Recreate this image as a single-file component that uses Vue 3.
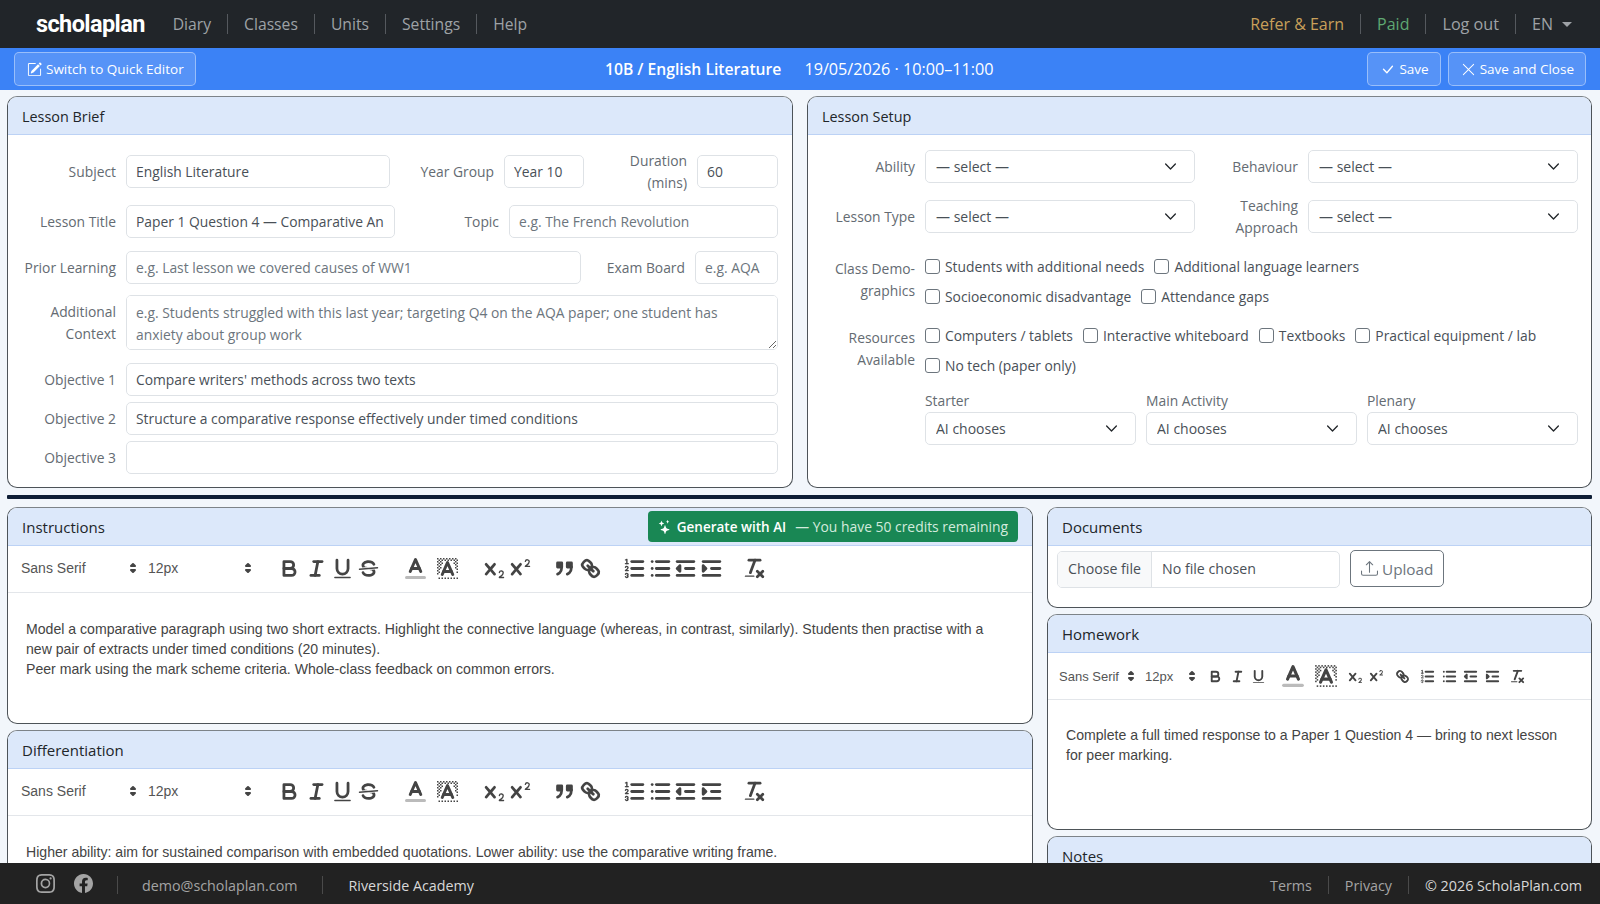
<template>
  <div class="page">
    <nav class="topnav">
      <span class="brand">scholaplan</span>
      <template v-for="(l, i) in navLeft" :key="l">
        <span v-if="i" class="sep"></span>
        <a class="nav-link">{{ l }}</a>
      </template>
      <span class="spacer"></span>
      <a class="nav-link refer">Refer &amp; Earn</a>
      <span class="sep"></span>
      <a class="nav-link paid">Paid</a>
      <span class="sep"></span>
      <a class="nav-link logout">Log out</a>
      <span class="sep"></span>
      <a class="nav-link lang">EN<i class="caret"></i></a>
    </nav>

    <header class="actionbar">
      <button class="bar-btn">
        <svg viewBox="0 0 16 16" width="15" height="15" fill="currentColor"><path d="M15.502 1.94a.5.5 0 0 1 0 .706L14.459 3.69l-2-2L13.502.646a.5.5 0 0 1 .707 0l1.293 1.293zm-1.75 2.456-2-2L4.939 9.21a.5.5 0 0 0-.121.196l-.805 2.414a.25.25 0 0 0 .316.316l2.414-.805a.5.5 0 0 0 .196-.12l6.813-6.814z"/><path d="M1 13.5A1.5 1.5 0 0 0 2.5 15h11a1.5 1.5 0 0 0 1.5-1.5v-6a.5.5 0 0 0-1 0v6a.5.5 0 0 1-.5.5h-11a.5.5 0 0 1-.5-.5v-11a.5.5 0 0 1 .5-.5H9a.5.5 0 0 0 0-1H2.5A1.5 1.5 0 0 0 1 2.5z"/></svg>
        Switch to Quick Editor
      </button>
      <div class="bar-title"><b>10B / English Literature</b><span>19/05/2026 · 10:00–11:00</span></div>
      <div class="bar-right">
        <button class="bar-btn">
          <svg viewBox="0 0 16 16" width="15" height="15" fill="currentColor"><path d="M12.736 3.97a.733.733 0 0 1 1.047 0c.286.289.29.756.01 1.05L7.88 12.01a.733.733 0 0 1-1.065.02L3.217 8.384a.757.757 0 0 1 0-1.06.733.733 0 0 1 1.047 0l3.052 3.093 5.4-6.425z"/></svg>
          Save
        </button>
        <button class="bar-btn">
          <svg viewBox="0 0 16 16" width="15" height="15" fill="currentColor"><path d="M2.146 2.854a.5.5 0 1 1 .708-.708L8 7.293l5.146-5.147a.5.5 0 0 1 .708.708L8.707 8l5.147 5.146a.5.5 0 0 1-.708.708L8 8.707l-5.146 5.147a.5.5 0 0 1-.708-.708L7.293 8z"/></svg>
          Save and Close
        </button>
      </div>
    </header>

    <main class="content">
      <div class="top-row">
        <section class="card">
          <div class="card-head">Lesson Brief</div>
          <div class="card-body brief">
            <div class="row r1">
              <label>Subject</label><input value="English Literature" />
              <label>Year Group</label><input value="Year 10" />
              <label>Duration (mins)</label><input value="60" />
            </div>
            <div class="row r2">
              <label>Lesson Title</label><input value="Paper 1 Question 4 — Comparative Analysis" />
              <label>Topic</label><input placeholder="e.g. The French Revolution" />
            </div>
            <div class="row r3">
              <label>Prior Learning</label><input placeholder="e.g. Last lesson we covered causes of WW1" />
              <label>Exam Board</label><input placeholder="e.g. AQA" />
            </div>
            <div class="row r4">
              <label>Additional Context</label>
              <textarea placeholder="e.g. Students struggled with this last year; targeting Q4 on the AQA paper; one student has anxiety about group work"></textarea>
            </div>
            <div class="row r5"><label>Objective 1</label><input value="Compare writers' methods across two texts" /></div>
            <div class="row r5"><label>Objective 2</label><input value="Structure a comparative response effectively under timed conditions" /></div>
            <div class="row r5"><label>Objective 3</label><input /></div>
          </div>
        </section>

        <section class="card">
          <div class="card-head">Lesson Setup</div>
          <div class="card-body setup">
            <div class="row s1">
              <label>Ability</label><select><option>— select —</option></select>
              <label>Behaviour</label><select><option>— select —</option></select>
            </div>
            <div class="row s1 s2">
              <label>Lesson Type</label><select><option>— select —</option></select>
              <label>Teaching Approach</label><select><option>— select —</option></select>
            </div>
            <div v-for="g in checkGroups" :key="g.label" class="row s3">
              <label>{{ g.label }}</label>
              <div>
                <div v-for="(line, i) in g.lines" :key="i" class="check-line">
                  <label v-for="c in line" :key="c" class="check"><input type="checkbox" />{{ c }}</label>
                </div>
              </div>
            </div>
            <div class="phases">
              <div v-for="p in phases" :key="p" class="phase">
                <label>{{ p }}</label>
                <select><option>AI chooses</option></select>
              </div>
            </div>
          </div>
        </section>
      </div>

      <div class="divider"></div>

      <div class="bottom-row">
        <div class="col">
          <section class="card">
            <div class="card-head gen-head">
              Instructions
              <button class="gen-btn">
                <svg viewBox="0 0 16 16" width="14" height="14" fill="currentColor"><path d="M7.657 6.247c.11-.33.576-.33.686 0l.645 1.937a2.89 2.89 0 0 0 1.829 1.828l1.936.645c.33.11.33.576 0 .686l-1.937.645a2.89 2.89 0 0 0-1.828 1.829l-.645 1.936a.361.361 0 0 1-.686 0l-.645-1.937a2.89 2.89 0 0 0-1.828-1.828l-1.937-.645a.361.361 0 0 1 0-.686l1.937-.645a2.89 2.89 0 0 0 1.828-1.828zM3.794 1.148a.217.217 0 0 1 .412 0l.387 1.162c.173.518.579.924 1.097 1.097l1.162.387a.217.217 0 0 1 0 .412l-1.162.387A1.73 1.73 0 0 0 4.593 5.69l-.387 1.162a.217.217 0 0 1-.412 0L3.407 5.69A1.73 1.73 0 0 0 2.31 4.593l-1.162-.387a.217.217 0 0 1 0-.412l1.162-.387A1.73 1.73 0 0 0 3.407 2.31zM10.863.099a.145.145 0 0 1 .274 0l.258.774c.115.346.386.617.732.732l.774.258a.145.145 0 0 1 0 .274l-.774.258a1.16 1.16 0 0 0-.732.732l-.258.774a.145.145 0 0 1-.274 0l-.258-.774a1.16 1.16 0 0 0-.732-.732L9.1 2.137a.145.145 0 0 1 0-.274l.774-.258c.346-.115.617-.386.732-.732z"/></svg>
                <b>Generate with AI</b><span>— You have 50 credits remaining</span>
              </button>
            </div>
            <div class="toolbar wide">
              <div class="picker font-p">Sans Serif<svg viewBox="0 0 18 18" v-html="icons.arrows"></svg></div>
              <div class="picker size-p">12px<svg viewBox="0 0 18 18" v-html="icons.arrows"></svg></div>
              <div v-for="(g, i) in wideGroups" :key="i" class="tool-group">
                <span v-for="n in g" :key="n" class="tool" :class="n"><svg viewBox="0 0 18 18" v-html="icons[n]"></svg></span>
              </div>
            </div>
            <div class="editor ed-inst">
              Model a comparative paragraph using two short extracts. Highlight the connective language (whereas, in contrast, similarly). Students then practise with a new pair of extracts under timed conditions (20 minutes).<br />
              Peer mark using the mark scheme criteria. Whole-class feedback on common errors.
            </div>
          </section>

          <section class="card">
            <div class="card-head">Differentiation</div>
            <div class="toolbar wide">
              <div class="picker font-p">Sans Serif<svg viewBox="0 0 18 18" v-html="icons.arrows"></svg></div>
              <div class="picker size-p">12px<svg viewBox="0 0 18 18" v-html="icons.arrows"></svg></div>
              <div v-for="(g, i) in wideGroups" :key="i" class="tool-group">
                <span v-for="n in g" :key="n" class="tool" :class="n"><svg viewBox="0 0 18 18" v-html="icons[n]"></svg></span>
              </div>
            </div>
            <div class="editor ed-inst">
              Higher ability: aim for sustained comparison with embedded quotations. Lower ability: use the comparative writing frame.
            </div>
          </section>
        </div>

        <div class="col">
          <section class="card">
            <div class="card-head">Documents</div>
            <div class="docs">
              <div class="file"><span class="file-btn">Choose file</span><span class="file-name">No file chosen</span></div>
              <button class="upload">
                <svg viewBox="0 0 16 16" width="17" height="17" fill="currentColor"><path d="M.5 9.9a.5.5 0 0 1 .5.5v2.5a1 1 0 0 0 1 1h12a1 1 0 0 0 1-1v-2.5a.5.5 0 0 1 1 0v2.5a2 2 0 0 1-2 2H2a2 2 0 0 1-2-2v-2.5a.5.5 0 0 1 .5-.5"/><path d="M7.646 1.146a.5.5 0 0 1 .708 0l3 3a.5.5 0 0 1-.708.708L8.5 2.707V11.5a.5.5 0 0 1-1 0V2.707L5.354 4.854a.5.5 0 1 1-.708-.708z"/></svg>
                Upload
              </button>
            </div>
          </section>

          <section class="card">
            <div class="card-head">Homework</div>
            <div class="toolbar compact">
              <div class="picker font-p">Sans Serif<svg viewBox="0 0 18 18" v-html="icons.arrows"></svg></div>
              <div class="picker size-p">12px<svg viewBox="0 0 18 18" v-html="icons.arrows"></svg></div>
              <div v-for="(g, i) in compactGroups" :key="i" class="tool-group">
                <span v-for="n in g" :key="n" class="tool" :class="n"><svg viewBox="0 0 18 18" v-html="icons[n]"></svg></span>
              </div>
            </div>
            <div class="editor ed-home">
              Complete a full timed response to a Paper 1 Question 4 — bring to next lesson for peer marking.
            </div>
          </section>

          <section class="card">
            <div class="card-head">Notes</div>
          </section>
        </div>
      </div>
    </main>

    <footer class="foot">
      <svg viewBox="0 0 16 16" width="19" height="19" fill="currentColor"><path d="M8 0C5.829 0 5.556.01 4.703.048 3.85.088 3.269.222 2.76.42a3.9 3.9 0 0 0-1.417.923A3.9 3.9 0 0 0 .42 2.76C.222 3.268.087 3.85.048 4.7.01 5.555 0 5.827 0 8.001c0 2.172.01 2.444.048 3.297.04.852.174 1.433.372 1.942.205.526.478.972.923 1.417.444.445.89.719 1.416.923.51.198 1.09.333 1.942.372C5.555 15.99 5.827 16 8 16s2.444-.01 3.298-.048c.851-.04 1.434-.174 1.943-.372a3.9 3.9 0 0 0 1.416-.923c.445-.445.718-.891.923-1.417.197-.509.332-1.09.372-1.942C15.99 10.445 16 10.173 16 8s-.01-2.445-.048-3.299c-.04-.851-.175-1.433-.372-1.941a3.9 3.9 0 0 0-.923-1.417A3.9 3.9 0 0 0 13.24.42c-.51-.198-1.092-.333-1.943-.372C10.443.01 10.172 0 7.998 0zm-.717 1.442h.718c2.136 0 2.389.007 3.232.046.78.035 1.204.166 1.486.275.373.145.64.319.92.599s.453.546.598.92c.11.281.24.705.275 1.485.039.843.047 1.096.047 3.231s-.008 2.389-.047 3.232c-.035.78-.166 1.203-.275 1.485a2.5 2.5 0 0 1-.599.919c-.28.28-.546.453-.92.598-.28.11-.704.24-1.485.276-.843.038-1.096.047-3.232.047s-2.39-.009-3.233-.047c-.78-.036-1.203-.166-1.485-.276a2.5 2.5 0 0 1-.92-.598 2.5 2.5 0 0 1-.6-.92c-.109-.281-.24-.705-.275-1.485-.038-.843-.046-1.096-.046-3.233s.008-2.388.046-3.231c.036-.78.166-1.204.276-1.486.145-.373.319-.64.599-.92s.546-.453.92-.598c.282-.11.705-.24 1.485-.276.738-.034 1.024-.044 2.515-.045zm4.988 1.328a.96.96 0 1 0 0 1.92.96.96 0 0 0 0-1.92m-4.27 1.122a4.109 4.109 0 1 0 0 8.217 4.109 4.109 0 0 0 0-8.217m0 1.441a2.667 2.667 0 1 1 0 5.334 2.667 2.667 0 0 1 0-5.334"/></svg>
      <svg class="fb" viewBox="0 0 16 16" width="19" height="19" fill="currentColor"><path d="M16 8.049c0-4.446-3.582-8.05-8-8.05C3.58 0-.002 3.603-.002 8.05c0 4.017 2.926 7.347 6.75 7.951v-5.625h-2.03V8.05H6.75V6.275c0-2.017 1.195-3.131 3.022-3.131.876 0 1.791.157 1.791.157v1.98h-1.009c-.993 0-1.303.621-1.303 1.258v1.51h2.218l-.354 2.326H9.25V16c3.824-.604 6.75-3.934 6.75-7.951"/></svg>
      <span class="sep"></span>
      <span>demo@scholaplan.com</span>
      <span class="sep"></span>
      <span class="school">Riverside Academy</span>
      <span class="spacer"></span>
      <span>Terms</span>
      <span class="sep tight"></span>
      <span>Privacy</span>
      <span class="sep tight"></span>
      <span class="copy">© 2026 ScholaPlan.com</span>
    </footer>
  </div>
</template>

<script setup>
const navLeft = ["Diary", "Classes", "Units", "Settings", "Help"];

const checkGroups = [
  {
    label: "Class Demo-graphics",
    lines: [
      ["Students with additional needs", "Additional language learners"],
      ["Socioeconomic disadvantage", "Attendance gaps"],
    ],
  },
  {
    label: "Resources Available",
    lines: [
      ["Computers / tablets", "Interactive whiteboard", "Textbooks", "Practical equipment / lab"],
      ["No tech (paper only)"],
    ],
  },
];

const phases = ["Starter", "Main Activity", "Plenary"];

const wideGroups = [
  ["bold", "italic", "underline", "strike"],
  ["color", "background"],
  ["sub", "sup"],
  ["blockquote", "link"],
  ["ol", "ul", "outdent", "indent"],
  ["clean"],
];

const compactGroups = [
  ["bold", "italic", "underline"],
  ["color", "background"],
  ["sub", "sup"],
  ["link"],
  ["ol", "ul", "outdent", "indent"],
  ["clean"],
];

// hatch behind the background-colour icon
let hatch = "";
for (let y = 2; y < 16; y++) {
  for (let x = 2; x < 16; x++) {
    let insideA = y >= 4 && y <= 14 && x >= 6 - (y - 4) * 0.4 && x <= 12 + (y - 4) * 0.4;
    if ((x + y) % 2 == 0 && !insideA) {
      hatch += `<rect x="${x}" y="${y}" width="1" height="1"/>`;
    }
  }
}

const icons = {
  arrows: '<polygon class="q-s q-f" points="7 11 9 13 11 11 7 11"/><polygon class="q-s q-f" points="7 7 9 5 11 7 7 7"/>',
  bold: '<path class="q-s" d="M5,4H9.5A2.5,2.5,0,0,1,12,6.5v0A2.5,2.5,0,0,1,9.5,9H5A0,0,0,0,1,5,9V4A0,0,0,0,1,5,4Z"/><path class="q-s" d="M5,9h5.5A2.5,2.5,0,0,1,13,11.5v0A2.5,2.5,0,0,1,10.5,14H5a0,0,0,0,1,0,0V9A0,0,0,0,1,5,9Z"/>',
  italic: '<line class="q-s" x1="7" x2="13" y1="4" y2="4"/><line class="q-s" x1="5" x2="11" y1="14" y2="14"/><line class="q-s" x1="8" x2="10" y1="14" y2="4"/>',
  underline: '<path class="q-s" d="M5,3V9a4.012,4.012,0,0,0,4,4H9a4.012,4.012,0,0,0,4-4V3"/><rect class="q-f" height="1" rx=".5" ry=".5" width="12" x="3" y="15"/>',
  strike: '<line class="q-s q-t" x1="15.5" x2="2.5" y1="8.5" y2="9.5"/><path class="q-f" d="M9.007,8C6.542,7.791,6,7.519,6,6.5,6,5.792,7.283,5,9,5c1.571,0,2.765.679,2.969,1.309a1,1,0,0,0,1.9-.617C13.356,4.106,11.354,3,9,3,6.2,3,4,4.538,4,6.5a3.2,3.2,0,0,0,.5,1.843Z"/><path class="q-f" d="M8.984,10C11.457,10.208,12,10.479,12,11.5c0,.708-1.283,1.5-3,1.5-1.571,0-2.765-.679-2.969-1.309a1,1,0,1,0-1.9.617C4.644,13.894,6.646,15,9,15c2.8,0,5-1.538,5-3.5a3.2,3.2,0,0,0-.5-1.843Z"/>',
  color: '<line class="q-s q-l" x1="3" x2="15" y1="15" y2="15"/><polyline class="q-s" points="5.5 11 9 3 12.5 11"/><line class="q-s" x1="11.63" x2="6.38" y1="9" y2="9"/>',
  background: '<g class="q-f">' + hatch + '</g><polyline class="q-s" points="5.5 13 9 5 12.5 13"/><line class="q-s" x1="11.63" x2="6.38" y1="11" y2="11"/>',
  sub: '<path class="q-f" d="M15.5,15H13.861a3.858,3.858,0,0,0,1.914-2.975,1.8,1.8,0,0,0-1.6-1.751A1.921,1.921,0,0,0,12.021,11.7a0.50013,0.50013,0,1,0,.957.291h0a0.914,0.914,0,0,1,1.053-.725,0.81,0.81,0,0,1,.744.762c0,1.076-1.16971,1.86982-1.93971,2.43082A1.45639,1.45639,0,0,0,12,15.5a0.5,0.5,0,0,0,.5.5h3A0.5,0.5,0,0,0,15.5,15Z"/><path class="q-f" d="M9.65,5.241a1,1,0,0,0-1.409.108L6,7.964,3.759,5.349A1,1,0,0,0,2.192,6.59178Q2.21541,6.6213,2.241,6.649L4.684,9.5,2.241,12.35A1,1,0,0,0,3.71,13.70722q0.02557-.02768.049-0.05722L6,11.036,8.241,13.65a1,1,0,1,0,1.567-1.24277Q9.78459,12.3777,9.759,12.35L7.316,9.5,9.759,6.651A1,1,0,0,0,9.65,5.241Z"/>',
  sup: '<path class="q-f" d="M15.5,7H13.861a4.015,4.015,0,0,0,1.914-2.975,1.8,1.8,0,0,0-1.6-1.751A1.922,1.922,0,0,0,12.021,3.7a0.5,0.5,0,1,0,.957.291,0.917,0.917,0,0,1,1.053-.725,0.81,0.81,0,0,1,.744.762c0,1.077-1.164,1.925-1.934,2.486A1.423,1.423,0,0,0,12,7.5a0.5,0.5,0,0,0,.5.5h3A0.5,0.5,0,0,0,15.5,7Z"/><path class="q-f" d="M9.651,5.241a1,1,0,0,0-1.41.108L6,7.964,3.759,5.349a1,1,0,1,0-1.519,1.3L4.683,9.5,2.241,12.35a1,1,0,1,0,1.519,1.3L6,11.036,8.241,13.65a1,1,0,0,0,1.519-1.3L7.317,9.5,9.759,6.651A1,1,0,0,0,9.651,5.241Z"/>',
  blockquote: '<rect class="q-f q-s" height="3" width="3" x="4" y="5"/><rect class="q-f q-s" height="3" width="3" x="11" y="5"/><path class="q-s" d="M7,8c0,4.031-3,5-3,5"/><path class="q-s" d="M14,8c0,4.031-3,5-3,5"/>',
  link: '<line class="q-s" x1="7" x2="11" y1="7" y2="11"/><path class="q-s" d="M8.9,4.577a3.476,3.476,0,0,1,.36,4.679A3.476,3.476,0,0,1,4.577,8.9C3.185,7.5,2.035,6.4,4.217,4.217S7.5,3.185,8.9,4.577Z"/><path class="q-s" d="M13.423,9.1a3.476,3.476,0,0,0-4.679-.36,3.476,3.476,0,0,0,.36,4.679c1.392,1.392,2.5,2.542,4.679.36S14.815,10.5,13.423,9.1Z"/>',
  ol: '<line class="q-s" x1="7" x2="15" y1="4" y2="4"/><line class="q-s" x1="7" x2="15" y1="9" y2="9"/><line class="q-s" x1="7" x2="15" y1="14" y2="14"/><line class="q-s q-t" x1="2.5" x2="4.5" y1="5.5" y2="5.5"/><path class="q-f" d="M3.5,6A0.5,0.5,0,0,1,3,5.5V3.085l-0.276.138A0.5,0.5,0,0,1,2.053,3c-0.124-.247-0.023-0.324.224-0.447l1-.5A0.5,0.5,0,0,1,4,2.5v3A0.5,0.5,0,0,1,3.5,6Z"/><path class="q-s q-t" d="M4.5,10.5h-2c0-.234,1.85-1.076,1.85-2.234A0.959,0.959,0,0,0,2.5,8.156"/><path class="q-s q-t" d="M2.5,14.846a0.959,0.959,0,0,0,1.85-.109A0.7,0.7,0,0,0,3.75,14a0.688,0.688,0,0,0,.6-0.736,0.959,0.959,0,0,0-1.85-.109"/>',
  ul: '<line class="q-s" x1="6" x2="15" y1="4" y2="4"/><line class="q-s" x1="6" x2="15" y1="9" y2="9"/><line class="q-s" x1="6" x2="15" y1="14" y2="14"/><line class="q-s" x1="3" x2="3" y1="4" y2="4"/><line class="q-s" x1="3" x2="3" y1="9" y2="9"/><line class="q-s" x1="3" x2="3" y1="14" y2="14"/>',
  outdent: '<line class="q-s" x1="3" x2="15" y1="14" y2="14"/><line class="q-s" x1="3" x2="15" y1="4" y2="4"/><line class="q-s" x1="9" x2="15" y1="9" y2="9"/><polyline class="q-f q-s" points="5 7 5 11 3 9 5 7"/>',
  indent: '<line class="q-s" x1="3" x2="15" y1="14" y2="14"/><line class="q-s" x1="3" x2="15" y1="4" y2="4"/><line class="q-s" x1="9" x2="15" y1="9" y2="9"/><polyline class="q-f q-s" points="3 7 3 11 5 9 3 7"/>',
  clean: '<line class="q-s" x1="5" x2="13" y1="3" y2="3"/><line class="q-s" x1="6" x2="9.35" y1="12" y2="3"/><line class="q-s" x1="11" x2="15" y1="11" y2="15"/><line class="q-s" x1="15" x2="11" y1="11" y2="15"/><rect class="q-f" height="1" rx=".5" ry=".5" width="7" x="2" y="14"/>',
};
</script>

<style scoped>
.page {
  display: flex;
  flex-direction: column;
  height: 904px;
  overflow: hidden;
  background: #f2f6fb;
  color: #212529;
  font-family: "Open Sans", "Noto Sans", sans-serif;
  font-size: 13.85px;
}

.topnav {
  display: flex;
  align-items: center;
  flex: 0 0 48px;
  padding: 0 28px 0 36px;
  background: #212529;
  color: #9ea2a6;
}
.brand {
  margin-right: 28px;
  color: #fff;
  font-family: Roboto, sans-serif;
  font-size: 23.5px;
  font-weight: 700;
  letter-spacing: -0.6px;
}
.nav-link { font-size: 15.7px; }
.sep {
  width: 1px;
  height: 20px;
  margin: 0 16px;
  background: #55595e;
}
.spacer { flex: 1; }
.refer { color: #c9a05a; font-size: 16px; }
.paid { color: #5fa872; font-size: 16px; }
.logout { font-size: 16.2px; }
.lang { display: flex; align-items: center; font-weight: 500; font-size: 16px; }
.caret {
  margin-left: 9px;
  border-top: 5px solid #9ea2a6;
  border-left: 5px solid transparent;
  border-right: 5px solid transparent;
}

.actionbar {
  position: relative;
  display: flex;
  align-items: center;
  justify-content: space-between;
  flex: 0 0 42px;
  padding: 0 14px;
  background: #3b82f6;
  color: #fff;
}
.bar-btn {
  display: inline-flex;
  align-items: center;
  gap: 4px;
  height: 34px;
  padding: 0 11px 0 12px;
  border: 1px solid rgba(255, 255, 255, 0.4);
  border-radius: 5px;
  background: rgba(255, 255, 255, 0.14);
  color: #fff;
  font: inherit;
  font-size: 13.5px;
}
.bar-title {
  position: absolute;
  left: 605px;
  display: flex;
  gap: 23px;
  font-size: 15.7px;
}
.bar-title b { font-weight: 600; }
.bar-title span { font-size: 16.2px; }
.bar-right { display: flex; gap: 7px; }

.content {
  flex: 1;
  min-height: 0;
  overflow: hidden;
  padding: 6px 8px 0 7px;
}
.top-row {
  display: grid;
  grid-template-columns: 786px 785px;
  gap: 14px;
}
.card {
  border: 1px solid #4d5358;
  border-top-color: #7d8388;
  border-radius: 10px;
  background: #fff;
  overflow: hidden;
}
.card-head {
  display: flex;
  align-items: center;
  box-sizing: border-box;
  height: 38px;
  padding: 0 14px;
  border-bottom: 1px solid #bcd2f5;
  background: #dce8fa;
  font-size: 15px;
}
.top-row .card-head { font-size: 14.4px; padding-top: 1px; }

.row { display: grid; column-gap: 10px; align-items: center; }
.row > label {
  color: #646b72;
  text-align: right;
  line-height: 21.6px;
}
input:not([type="checkbox"]), textarea, select {
  box-sizing: border-box;
  width: 100%;
  height: 33px;
  min-width: 0;
  padding: 0 10.5px 0 9px;
  border: 1px solid #dee2e6;
  border-radius: 5px;
  background-color: #fff;
  color: #495057;
  font: inherit;
  outline: none;
}
input::placeholder, textarea::placeholder { color: #6c757d; opacity: 1; }

.brief { height: 352px; padding: 15px 14px 0 14px; box-sizing: border-box; }
.r1 { grid-template-columns: 94px 264px 94px 80px 93px 81px; margin-bottom: 12px; }
.r2 { grid-template-columns: 94px 269px 94px 269px; margin-bottom: 13px; }
.r3 { grid-template-columns: 94px 455px 94px 83px; margin-bottom: 11px; }
.r4 { grid-template-columns: 94px 1fr; margin-bottom: 13px; }
.r5 { grid-template-columns: 94px 1fr; margin-bottom: 6px; }
textarea { height: 55px; padding: 6px 40px 6px 9px; line-height: 22px; resize: vertical; }

select {
  appearance: none;
  padding-left: 10px;
  font-size: 14px;
  background-image: url("data:image/svg+xml,%3csvg xmlns='http://www.w3.org/2000/svg' viewBox='0 0 16 16'%3e%3cpath fill='none' stroke='%23212529' stroke-linecap='round' stroke-linejoin='round' stroke-width='1.6' d='M2 5l6 6 6-6'/%3e%3c/svg%3e");
  background-repeat: no-repeat;
  background-position: right 16px center;
  background-size: 15px 13px;
}

.setup { height: 352px; padding: 15px 13px 0; box-sizing: border-box; }
.s1 { grid-template-columns: 94px 270px 93px 270px; margin-bottom: 12px; }
.s2 { margin-bottom: 18px; }
.s3 { grid-template-columns: 94px 1fr; align-items: start; margin-bottom: 9px; }
.s3 > label { padding-top: 2px; }
.check-line { display: flex; gap: 10px; height: 21px; margin-bottom: 9px; align-items: center; }
.check { display: inline-flex; align-items: center; gap: 5px; color: #495057; }
.check input {
  appearance: none;
  width: 15px;
  height: 15px;
  margin: 0;
  border: 1px solid #6c757d;
  border-radius: 3px;
  background: #fff;
}
.phases {
  display: grid;
  grid-template-columns: repeat(3, 1fr);
  gap: 10px;
  margin: -4px 0 0 104px;
}
.phase label { display: block; margin-bottom: 1px; color: #646b72; line-height: 21px; }

.divider {
  height: 4px;
  margin: 7px 0 8px;
  background: #0f1e36;
  border-radius: 1px;
}

.bottom-row {
  display: grid;
  grid-template-columns: 1026px 545px;
  gap: 14px;
}
.col { display: flex; flex-direction: column; gap: 6px; }

.gen-head { justify-content: space-between; padding-right: 14px; }
.gen-btn {
  display: inline-flex;
  align-items: center;
  gap: 5px;
  height: 31px;
  padding: 0 10px;
  border: 0;
  border-radius: 4px;
  background: #198754;
  color: #fff;
  font: inherit;
  font-size: 13.5px;
}
.gen-btn b { font-weight: 600; }
.gen-btn span { margin-left: 4px; color: #d3ebdd; font-size: 13.9px; }

.toolbar {
  display: flex;
  align-items: center;
  box-sizing: border-box;
  height: 47px;
  padding-left: 8px;
  padding-bottom: 2px;
  border-bottom: 1px solid #e3e6ea;
  color: #444;
  font-family: "Liberation Sans", sans-serif;
  font-size: 14px;
}
.picker {
  display: flex;
  align-items: center;
  justify-content: space-between;
  box-sizing: border-box;
  padding-left: 5px;
  color: #555;
}
.picker svg { width: 18px; height: 18px; }
.tool-group { display: flex; }
.tool { display: flex; align-items: center; justify-content: center; }

.wide .font-p { width: 127px; padding-right: 1px; }
.wide .size-p { width: 116px; padding-right: 2px; }
.wide .tool-group { margin-left: 17.5px; }
.wide .tool { width: 26.4px; }
.wide .tool svg { width: 25px; height: 25px; }
.wide .tool.color, .wide .tool.background { width: 32px; }
.wide .tool.color svg, .wide .tool.background svg { width: 27px; height: 27px; }
.wide .tool.ol, .wide .tool.ul, .wide .tool.outdent, .wide .tool.indent { width: 25.6px; }

.compact { padding-left: 6px; padding-bottom: 0; }
.compact .font-p { width: 86px; font-size: 13px; }
.compact .size-p { width: 61px; font-size: 13px; }
.compact .tool-group { margin-left: 4px; }
.compact .tool-group:nth-child(4) { margin-left: 7px; }
.compact .tool-group:nth-child(5) { margin-left: 2px; }
.compact .tool { width: 21.5px; }
.compact .tool svg { width: 17px; height: 17px; }
.compact .tool.color, .compact .tool.background { width: 33px; }
.compact .tool.color svg, .compact .tool.background svg { width: 28px; height: 28px; }

.editor {
  box-sizing: border-box;
  padding: 26px 17px 0 18px;
  color: #444;
  font-family: "Liberation Sans", sans-serif;
  font-size: 14.1px;
  line-height: 20px;
}
.ed-inst { height: 130px; padding-right: 30px; }
.ed-home { height: 129px; padding-top: 25px; padding-right: 30px; }

.docs { display: flex; gap: 10px; height: 57px; padding: 4px 9px 0; }
.file {
  display: flex;
  align-items: center;
  width: 281px;
  height: 35px;
  margin-top: 1px;
  border: 1px solid #dee2e6;
  border-radius: 5px;
  overflow: hidden;
}
.file-btn {
  display: flex;
  align-items: center;
  height: 100%;
  padding: 0 10px 2px;
  box-sizing: border-box;
  border-right: 1px solid #dee2e6;
  background: #f8f9fa;
  color: #495057;
  font-size: 14.2px;
}
.file-name { padding: 0 10px 2px; color: #495057; font-size: 14.2px; }
.upload {
  display: inline-flex;
  align-items: center;
  gap: 4px;
  height: 37px;
  padding: 0 10px;
  border: 1px solid #6c757d;
  border-radius: 5px;
  background: #fff;
  color: #6c757d;
  font: inherit;
  font-size: 15.3px;
}

.foot {
  display: flex;
  align-items: center;
  flex: 0 0 41px;
  box-sizing: border-box;
  padding: 3px 18px 0 36px;
  background: #222;
  color: #a4a4a4;
  font-size: 14.3px;
}
.foot svg { margin-top: -4px; }
.fb { margin-left: 19px; }
.foot .sep { height: 18px; margin: 0 24px; background: #4a4a4a; }
.foot .sep.tight { margin: 0 16px; }
.school { margin-left: 2px; color: #d8d8d8; }
.copy { color: #d8d8d8; }
</style>

<style>
html, body { margin: 0; }
.q-s { fill: none; stroke: #444; stroke-width: 2; stroke-linecap: round; stroke-linejoin: round; }
.q-t { stroke-width: 1; }
.q-f { fill: #444; }
.q-s.q-l { stroke: #bbb; }
</style>
